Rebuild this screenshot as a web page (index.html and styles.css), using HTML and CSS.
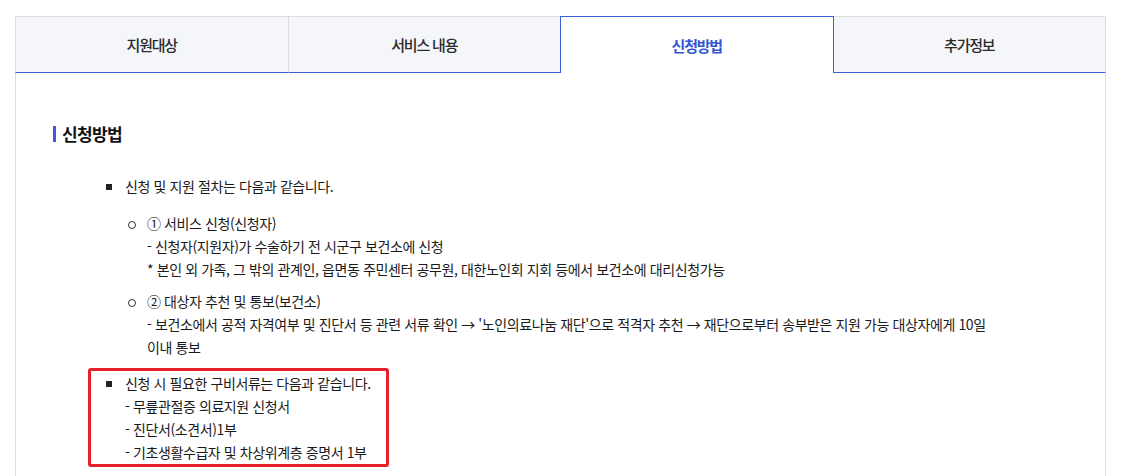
FILE: index.html
```html
<!DOCTYPE html>
<html lang="ko">
<head>
<meta charset="utf-8">
<title>신청방법</title>
<link rel="stylesheet" href="styles.css">
</head>
<body>
<div class="wrap">
  <ul class="tabs">
    <li class="tab">지원대상</li>
    <li class="tab">서비스 내용</li>
    <li class="tab active">신청방법</li>
    <li class="tab">추가정보</li>
  </ul>
  <div class="panel">
    <h3 class="title">신청방법</h3>
    <ul class="list">
      <li class="item">
        <p>신청 및 지원 절차는 다음과 같습니다.</p>
        <ul class="sub">
          <li class="sub-item">
            <p>① 서비스 신청(신청자)</p>
            <p>- 신청자(지원자)가 수술하기 전 시군구 보건소에 신청</p>
            <p>* 본인 외 가족, 그 밖의 관계인, 읍면동 주민센터 공무원, 대한노인회 지회 등에서 보건소에 대리신청가능</p>
          </li>
          <li class="sub-item">
            <p>② 대상자 추천 및 통보(보건소)</p>
            <p>- 보건소에서 공적 자격여부 및 진단서 등 관련 서류 확인 → '노인의료나눔 재단'으로 적격자 추천 → 재단으로부터 송부받은 지원 가능 대상자에게 10일 이내 통보</p>
          </li>
        </ul>
      </li>
      <li class="item boxed">
        <p>신청 시 필요한 구비서류는 다음과 같습니다.</p>
        <p>- 무릎관절증 의료지원 신청서</p>
        <p>- 진단서(소견서)1부</p>
        <p>- 기초생활수급자 및 차상위계층 증명서 1부</p>
      </li>
    </ul>
  </div>
</div>
</body>
</html>
```

FILE: styles.css
```css
* { box-sizing: border-box; }
html, body { margin: 0; padding: 0; background: #fff; }
body {
  font-family: "Noto Sans CJK KR", "Noto Sans", sans-serif;
  color: #1a1a1a;
  word-break: keep-all;
}
p { margin: 0; }
ul { list-style: none; margin: 0; padding: 0; }

.wrap { padding: 16px 16px 0 15px; }

.tabs { display: flex; }
.tab {
  flex: 1;
  height: 57px;
  display: flex;
  align-items: center;
  justify-content: center;
  background: #f4f6f9;
  border-top: 1px solid #dcdcdc;
  border-left: 1px solid #dcdcdc;
  border-bottom: 1px solid #3b5fd9;
  font-size: 15px;
  letter-spacing: -1.2px;
  font-weight: 500;
  color: #2a2a2a;
}
.tab:last-child { border-right: 1px solid #dcdcdc; }
.tab.active {
  background: #fff;
  border: 1px solid #3b5fd9;
  border-bottom: none;
  color: #3457d5;
  font-weight: 700;
}
.tab.active + .tab { border-left: none; }

.panel {
  border-left: 1px solid #dcdcdc;
  border-right: 1px solid #dcdcdc;
  padding: 49px 36px 20px 37px;
  height: 420px;
}
.title {
  margin: 0;
  font-size: 17px;
  line-height: 24px;
  font-weight: 700;
  letter-spacing: -0.6px;
  color: #111;
  display: flex;
  align-items: center;
  gap: 6px;
}
.title::before {
  content: "";
  width: 3px;
  height: 16px;
  background: #3b5bdb;
}

.list {
  margin-top: 29px;
  padding-left: 52px;
  font-size: 14px;
  line-height: 23px;
  letter-spacing: -0.4px;
  color: #1a1a1a;
}
.item {
  position: relative;
  padding-left: 20px;
}
.item::before {
  content: "";
  position: absolute;
  left: 1px;
  top: 9px;
  width: 6px;
  height: 6px;
  background: #222;
}
.sub { margin-top: 14px; }
.sub-item {
  position: relative;
  padding-left: 22px;
  margin-bottom: 9px;
  max-width: 885px;
}
.sub-item::before {
  content: "";
  position: absolute;
  left: 3px;
  top: 9px;
  width: 6px;
  height: 6px;
  border: 1px solid #333;
  border-radius: 50%;
}
.boxed {
  width: fit-content;
  margin-left: -17px;
  margin-top: 7px;
  border: 3px solid #e8202b;
  border-radius: 3px;
  padding: 1px 15px 0 34px;
}
.boxed::before { left: 15px; top: 10px; }
```
